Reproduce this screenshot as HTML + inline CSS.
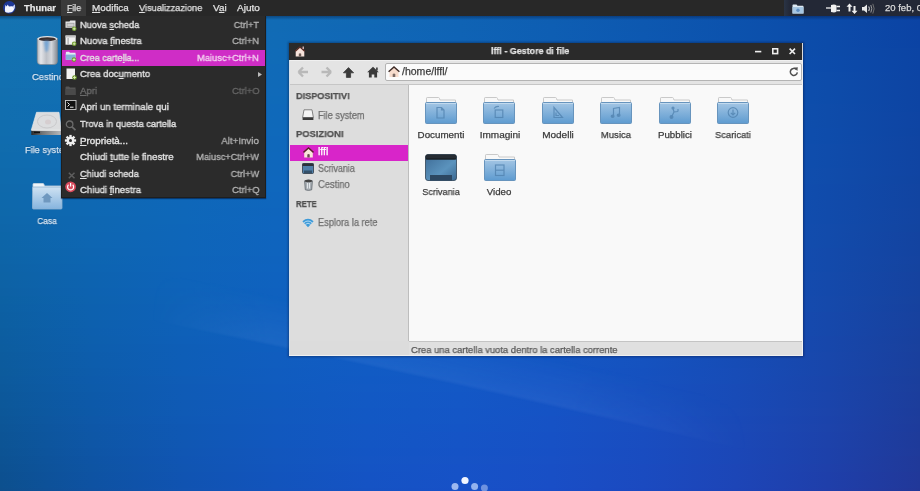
<!DOCTYPE html>
<html><head><meta charset="utf-8"><style>
html,body{margin:0;padding:0;}
body{width:920px;height:491px;overflow:hidden;position:relative;font-family:'Liberation Sans',sans-serif;}
u{text-decoration:underline;text-underline-offset:1px;text-decoration-thickness:1px;}
</style></head><body>

<svg width="0" height="0" style="position:absolute">
<defs>
 <linearGradient id="gFold" x1="0" y1="0" x2="0" y2="1">
  <stop offset="0" stop-color="#a4c6e4"/><stop offset="1" stop-color="#5e9bd0"/>
 </linearGradient>
 <linearGradient id="gFoldD" x1="0" y1="0" x2="0" y2="1">
  <stop offset="0" stop-color="#c6dcef"/><stop offset="1" stop-color="#7aaad6"/>
 </linearGradient>
 <linearGradient id="gDesk" x1="0" y1="0" x2="1" y2="1">
  <stop offset="0" stop-color="#3d6b96"/><stop offset="0.6" stop-color="#5b93bd"/><stop offset="1" stop-color="#3b6890"/>
 </linearGradient>
 <linearGradient id="gTrash" x1="0" y1="0" x2="1" y2="0">
  <stop offset="0" stop-color="#8a8f96"/><stop offset="0.25" stop-color="#e8ecef"/><stop offset="0.5" stop-color="#9aa4ae"/><stop offset="0.75" stop-color="#dfe3e6"/><stop offset="1" stop-color="#7d848c"/>
 </linearGradient>
 <linearGradient id="gDrive" x1="0" y1="0" x2="0" y2="1">
  <stop offset="0" stop-color="#f2f2f2"/><stop offset="1" stop-color="#c9cbcd"/>
 </linearGradient>
 <g id="folder">
  <path d="M1.5 5 V1.2 Q1.5 0.5 2.2 0.5 H13.5 Q14.2 0.5 14.5 1.5 L15 3 H30.5 V8 H1.5Z" fill="#f8f8f8" stroke="#c9c9c9" stroke-width="1"/>
  <rect x="0.5" y="5.5" width="31" height="21" rx="1" fill="url(#gFold)" stroke="#6794bd" stroke-width="1"/>
  <rect x="1" y="6" width="30" height="1" fill="#c2daee"/>
 </g>
</defs></svg>
<div style="position:absolute;left:0;top:0px;width:920px;height:8px;background:linear-gradient(90deg,#1674b1 0.0%,#1472b2 10.0%,#136fb3 20.0%,#116cb3 30.0%,#1068b3 40.0%,#0f63b2 50.0%,#0e5eb1 60.0%,#0d58af 70.0%,#0c51ac 80.0%,#0b4aa9 90.0%,#0a42a5 100.0%)"></div><div style="position:absolute;left:0;top:8px;width:920px;height:8px;background:linear-gradient(90deg,#1574b1 0.0%,#1472b2 10.0%,#126fb4 20.0%,#116cb4 30.0%,#1068b4 40.0%,#0f63b3 50.0%,#0e5eb1 60.0%,#0d58af 70.0%,#0c51ac 80.0%,#0b4aa9 90.0%,#0a43a5 100.0%)"></div><div style="position:absolute;left:0;top:16px;width:920px;height:8px;background:linear-gradient(90deg,#1573b1 0.0%,#1371b3 10.0%,#126fb4 20.0%,#116bb5 30.0%,#1068b4 40.0%,#0f63b4 50.0%,#0e5eb2 60.0%,#0d58b0 70.0%,#0c52ad 80.0%,#0b4ba9 90.0%,#0b43a4 100.0%)"></div><div style="position:absolute;left:0;top:24px;width:920px;height:8px;background:linear-gradient(90deg,#1473b1 0.0%,#1371b3 10.0%,#126eb4 20.0%,#116bb5 30.0%,#1067b5 40.0%,#0f63b4 50.0%,#0e5eb3 60.0%,#0d58b0 70.0%,#0c52ad 80.0%,#0c4ba9 90.0%,#0b43a4 100.0%)"></div><div style="position:absolute;left:0;top:32px;width:920px;height:8px;background:linear-gradient(90deg,#1472b1 0.0%,#1371b3 10.0%,#126eb5 20.0%,#116bb6 30.0%,#1067b6 40.0%,#0f63b5 50.0%,#0e5eb3 60.0%,#0d58b1 70.0%,#0c52ad 80.0%,#0c4ba9 90.0%,#0b43a4 100.0%)"></div><div style="position:absolute;left:0;top:40px;width:920px;height:8px;background:linear-gradient(90deg,#1472b0 0.0%,#1370b3 10.0%,#116eb5 20.0%,#106bb6 30.0%,#1067b6 40.0%,#0f63b5 50.0%,#0e5eb4 60.0%,#0d58b1 70.0%,#0c52ae 80.0%,#0c4ba9 90.0%,#0b43a4 100.0%)"></div><div style="position:absolute;left:0;top:48px;width:920px;height:8px;background:linear-gradient(90deg,#1372b0 0.0%,#1270b3 10.0%,#116eb5 20.0%,#106bb7 30.0%,#0f67b7 40.0%,#0f63b6 50.0%,#0e5eb4 60.0%,#0d58b2 70.0%,#0d52ae 80.0%,#0c4ba9 90.0%,#0c44a4 100.0%)"></div><div style="position:absolute;left:0;top:56px;width:920px;height:8px;background:linear-gradient(90deg,#1371b0 0.0%,#1270b3 10.0%,#116eb6 20.0%,#106bb7 30.0%,#0f67b7 40.0%,#0f63b7 50.0%,#0e5eb5 60.0%,#0d58b2 70.0%,#0d52ae 80.0%,#0c4baa 90.0%,#0c44a4 100.0%)"></div><div style="position:absolute;left:0;top:64px;width:920px;height:8px;background:linear-gradient(90deg,#1371b0 0.0%,#126fb4 10.0%,#116db6 20.0%,#106ab8 30.0%,#0f67b8 40.0%,#0f63b7 50.0%,#0e5eb5 60.0%,#0d58b3 70.0%,#0d52af 80.0%,#0c4baa 90.0%,#0c44a4 100.0%)"></div><div style="position:absolute;left:0;top:72px;width:920px;height:8px;background:linear-gradient(90deg,#1270b0 0.0%,#116fb4 10.0%,#116db6 20.0%,#106ab8 30.0%,#0f67b8 40.0%,#0f63b8 50.0%,#0e5eb6 60.0%,#0d59b3 70.0%,#0d52af 80.0%,#0d4caa 90.0%,#0c44a4 100.0%)"></div><div style="position:absolute;left:0;top:80px;width:920px;height:8px;background:linear-gradient(90deg,#1270b0 0.0%,#116fb4 10.0%,#106db7 20.0%,#106ab8 30.0%,#0f67b9 40.0%,#0f63b8 50.0%,#0e5eb7 60.0%,#0e59b4 70.0%,#0d52af 80.0%,#0d4caa 90.0%,#0d44a3 100.0%)"></div><div style="position:absolute;left:0;top:88px;width:920px;height:8px;background:linear-gradient(90deg,#126faf 0.0%,#116eb4 10.0%,#106cb7 20.0%,#106ab9 30.0%,#0f67ba 40.0%,#0e63b9 50.0%,#0e5eb7 60.0%,#0e59b4 70.0%,#0d52b0 80.0%,#0d4caa 90.0%,#0d44a3 100.0%)"></div><div style="position:absolute;left:0;top:96px;width:920px;height:8px;background:linear-gradient(90deg,#116faf 0.0%,#116eb4 10.0%,#106cb7 20.0%,#0f6ab9 30.0%,#0f66ba 40.0%,#0e63b9 50.0%,#0e5eb8 60.0%,#0e59b4 70.0%,#0d52b0 80.0%,#0d4caa 90.0%,#0d44a3 100.0%)"></div><div style="position:absolute;left:0;top:104px;width:920px;height:8px;background:linear-gradient(90deg,#116eaf 0.0%,#106db4 10.0%,#106cb7 20.0%,#0f69ba 30.0%,#0f66ba 40.0%,#0e62ba 50.0%,#0e5eb8 60.0%,#0e59b5 70.0%,#0e53b0 80.0%,#0e4caa 90.0%,#0d44a3 100.0%)"></div><div style="position:absolute;left:0;top:112px;width:920px;height:8px;background:linear-gradient(90deg,#116eaf 0.0%,#106db4 10.0%,#106bb8 20.0%,#0f69ba 30.0%,#0f66bb 40.0%,#0e62ba 50.0%,#0e5eb9 60.0%,#0e58b5 70.0%,#0e53b1 80.0%,#0e4caa 90.0%,#0e44a3 100.0%)"></div><div style="position:absolute;left:0;top:120px;width:920px;height:8px;background:linear-gradient(90deg,#106dae 0.0%,#106db4 10.0%,#106bb8 20.0%,#0f69ba 30.0%,#0f66bb 40.0%,#0f62bb 50.0%,#0e5eb9 60.0%,#0e58b6 70.0%,#0e53b1 80.0%,#0e4caa 90.0%,#0e44a3 100.0%)"></div><div style="position:absolute;left:0;top:128px;width:920px;height:8px;background:linear-gradient(90deg,#106dae 0.0%,#106cb4 10.0%,#0f6bb8 20.0%,#0f69bb 30.0%,#0f66bc 40.0%,#0f62bb 50.0%,#0e5eba 60.0%,#0e58b6 70.0%,#0e52b1 80.0%,#0e4cab 90.0%,#0e44a2 100.0%)"></div><div style="position:absolute;left:0;top:136px;width:920px;height:8px;background:linear-gradient(90deg,#106cae 0.0%,#106cb4 10.0%,#0f6ab8 20.0%,#0f68bb 30.0%,#0f65bc 40.0%,#0f62bc 50.0%,#0e5dba 60.0%,#0e58b6 70.0%,#0e52b1 80.0%,#0e4cab 90.0%,#0f44a2 100.0%)"></div><div style="position:absolute;left:0;top:144px;width:920px;height:8px;background:linear-gradient(90deg,#106cad 0.0%,#0f6bb4 10.0%,#0f6ab8 20.0%,#0f68bb 30.0%,#0f65bd 40.0%,#0f62bc 50.0%,#0f5dba 60.0%,#0f58b7 70.0%,#0f52b2 80.0%,#0f4cab 90.0%,#0f44a2 100.0%)"></div><div style="position:absolute;left:0;top:152px;width:920px;height:8px;background:linear-gradient(90deg,#0f6bad 0.0%,#0f6bb4 10.0%,#0f6ab9 20.0%,#0f68bc 30.0%,#0f65bd 40.0%,#0f62bd 50.0%,#0f5dbb 60.0%,#0f58b7 70.0%,#0f52b2 80.0%,#0f4cab 90.0%,#0f44a2 100.0%)"></div><div style="position:absolute;left:0;top:160px;width:920px;height:8px;background:linear-gradient(90deg,#0f6bad 0.0%,#0f6bb4 10.0%,#0f69b9 20.0%,#0f67bc 30.0%,#0f65be 40.0%,#0f61bd 50.0%,#0f5dbb 60.0%,#0f58b8 70.0%,#0f52b2 80.0%,#0f4cab 90.0%,#1044a2 100.0%)"></div><div style="position:absolute;left:0;top:168px;width:920px;height:8px;background:linear-gradient(90deg,#0f6aac 0.0%,#0f6ab3 10.0%,#0f69b9 20.0%,#0f67bc 30.0%,#0f65be 40.0%,#0f61be 50.0%,#0f5dbc 60.0%,#0f58b8 70.0%,#0f52b2 80.0%,#104cab 90.0%,#1044a2 100.0%)"></div><div style="position:absolute;left:0;top:176px;width:920px;height:8px;background:linear-gradient(90deg,#0f6aac 0.0%,#0f6ab3 10.0%,#0f69b9 20.0%,#0f67bd 30.0%,#0f64be 40.0%,#0f61be 50.0%,#0f5dbc 60.0%,#0f58b8 70.0%,#0f52b3 80.0%,#104cab 90.0%,#1044a1 100.0%)"></div><div style="position:absolute;left:0;top:184px;width:920px;height:8px;background:linear-gradient(90deg,#0f69ab 0.0%,#0f69b3 10.0%,#0f68b9 20.0%,#0f67bd 30.0%,#0f64bf 40.0%,#0f61bf 50.0%,#0f5dbd 60.0%,#0f58b9 70.0%,#1052b3 80.0%,#104bab 90.0%,#1144a1 100.0%)"></div><div style="position:absolute;left:0;top:192px;width:920px;height:8px;background:linear-gradient(90deg,#0e69ab 0.0%,#0e69b3 10.0%,#0e68b9 20.0%,#0f66bd 30.0%,#0f64bf 40.0%,#0f60bf 50.0%,#0f5cbd 60.0%,#1058b9 70.0%,#1052b3 80.0%,#104bab 90.0%,#1144a1 100.0%)"></div><div style="position:absolute;left:0;top:200px;width:920px;height:8px;background:linear-gradient(90deg,#0e68ab 0.0%,#0e68b3 10.0%,#0e67b9 20.0%,#0f66bd 30.0%,#0f63bf 40.0%,#0f60bf 50.0%,#0f5cbd 60.0%,#1057b9 70.0%,#1052b3 80.0%,#114bab 90.0%,#1144a1 100.0%)"></div><div style="position:absolute;left:0;top:208px;width:920px;height:8px;background:linear-gradient(90deg,#0e68aa 0.0%,#0e68b3 10.0%,#0e67b9 20.0%,#0f65bd 30.0%,#0f63c0 40.0%,#0f60c0 50.0%,#105cbe 60.0%,#1057ba 70.0%,#1052b4 80.0%,#114bab 90.0%,#1244a1 100.0%)"></div><div style="position:absolute;left:0;top:216px;width:920px;height:8px;background:linear-gradient(90deg,#0e67aa 0.0%,#0e67b2 10.0%,#0e67b9 20.0%,#0f65be 30.0%,#0f63c0 40.0%,#0f60c0 50.0%,#105cbe 60.0%,#1057ba 70.0%,#1151b4 80.0%,#114bab 90.0%,#1244a1 100.0%)"></div><div style="position:absolute;left:0;top:224px;width:920px;height:8px;background:linear-gradient(90deg,#0e66a9 0.0%,#0e67b2 10.0%,#0e66b9 20.0%,#0f65be 30.0%,#0f62c0 40.0%,#0f5fc1 50.0%,#105cbf 60.0%,#1057ba 70.0%,#1151b4 80.0%,#124bab 90.0%,#1244a0 100.0%)"></div><div style="position:absolute;left:0;top:232px;width:920px;height:8px;background:linear-gradient(90deg,#0d66a8 0.0%,#0e66b2 10.0%,#0e66b9 20.0%,#0f64be 30.0%,#0f62c1 40.0%,#0f5fc1 50.0%,#105bbf 60.0%,#1157bb 70.0%,#1151b4 80.0%,#124bab 90.0%,#1343a0 100.0%)"></div><div style="position:absolute;left:0;top:240px;width:920px;height:8px;background:linear-gradient(90deg,#0d65a8 0.0%,#0e66b2 10.0%,#0e65b9 20.0%,#0f64be 30.0%,#0f62c1 40.0%,#105fc1 50.0%,#105bbf 60.0%,#1156bb 70.0%,#1251b4 80.0%,#124bab 90.0%,#1343a0 100.0%)"></div><div style="position:absolute;left:0;top:248px;width:920px;height:8px;background:linear-gradient(90deg,#0d65a7 0.0%,#0e65b1 10.0%,#0e65b9 20.0%,#0f64be 30.0%,#0f61c1 40.0%,#105fc2 50.0%,#105bc0 60.0%,#1156bb 70.0%,#1251b5 80.0%,#134aab 90.0%,#1343a0 100.0%)"></div><div style="position:absolute;left:0;top:256px;width:920px;height:8px;background:linear-gradient(90deg,#0d64a7 0.0%,#0d65b1 10.0%,#0e64b9 20.0%,#0f63be 30.0%,#0f61c1 40.0%,#105ec2 50.0%,#115ac0 60.0%,#1156bc 70.0%,#1250b5 80.0%,#134aab 90.0%,#1443a0 100.0%)"></div><div style="position:absolute;left:0;top:264px;width:920px;height:8px;background:linear-gradient(90deg,#0d63a6 0.0%,#0d64b1 10.0%,#0e64b9 20.0%,#0f63bf 30.0%,#0f61c2 40.0%,#105ec2 50.0%,#115ac0 60.0%,#1256bc 70.0%,#1250b5 80.0%,#134aab 90.0%,#14439f 100.0%)"></div><div style="position:absolute;left:0;top:272px;width:920px;height:8px;background:linear-gradient(90deg,#0d63a5 0.0%,#0d63b0 10.0%,#0e63b9 20.0%,#0f62bf 30.0%,#0f60c2 40.0%,#105ec3 50.0%,#115ac1 60.0%,#1255bc 70.0%,#1350b5 80.0%,#144aab 90.0%,#15429f 100.0%)"></div><div style="position:absolute;left:0;top:280px;width:920px;height:8px;background:linear-gradient(90deg,#0d62a5 0.0%,#0d63b0 10.0%,#0e63b9 20.0%,#0f62bf 30.0%,#0f60c2 40.0%,#105dc3 50.0%,#115ac1 60.0%,#1255bc 70.0%,#1350b5 80.0%,#1449ab 90.0%,#15429f 100.0%)"></div><div style="position:absolute;left:0;top:288px;width:920px;height:8px;background:linear-gradient(90deg,#0d61a4 0.0%,#0d62b0 10.0%,#0e62b9 20.0%,#0f61bf 30.0%,#1060c2 40.0%,#105dc3 50.0%,#1159c1 60.0%,#1255bd 70.0%,#134fb5 80.0%,#1449ab 90.0%,#15429f 100.0%)"></div><div style="position:absolute;left:0;top:296px;width:920px;height:8px;background:linear-gradient(90deg,#0c61a3 0.0%,#0d62af 10.0%,#0e62b8 20.0%,#0f61bf 30.0%,#105fc2 40.0%,#115cc3 50.0%,#1259c1 60.0%,#1354bd 70.0%,#144fb5 80.0%,#1549ab 90.0%,#16429e 100.0%)"></div><div style="position:absolute;left:0;top:304px;width:920px;height:8px;background:linear-gradient(90deg,#0c60a3 0.0%,#0d61af 10.0%,#0e61b8 20.0%,#0f60bf 30.0%,#105fc3 40.0%,#115cc4 50.0%,#1259c2 60.0%,#1354bd 70.0%,#144fb6 80.0%,#1549ab 90.0%,#16419e 100.0%)"></div><div style="position:absolute;left:0;top:312px;width:920px;height:8px;background:linear-gradient(90deg,#0c5fa2 0.0%,#0d61af 10.0%,#0e61b8 20.0%,#0f60bf 30.0%,#105ec3 40.0%,#115cc4 50.0%,#1258c2 60.0%,#1354bd 70.0%,#144eb6 80.0%,#1648ab 90.0%,#17419e 100.0%)"></div><div style="position:absolute;left:0;top:320px;width:920px;height:8px;background:linear-gradient(90deg,#0c5fa1 0.0%,#0d60ae 10.0%,#0e60b8 20.0%,#0f5fbf 30.0%,#105ec3 40.0%,#115bc4 50.0%,#1258c2 60.0%,#1353be 70.0%,#154eb6 80.0%,#1648ab 90.0%,#17419e 100.0%)"></div><div style="position:absolute;left:0;top:328px;width:920px;height:8px;background:linear-gradient(90deg,#0c5ea0 0.0%,#0d5fae 10.0%,#0e60b8 20.0%,#0f5fbf 30.0%,#105dc3 40.0%,#115bc4 50.0%,#1357c3 60.0%,#1453be 70.0%,#154eb6 80.0%,#1648ab 90.0%,#18409e 100.0%)"></div><div style="position:absolute;left:0;top:336px;width:920px;height:8px;background:linear-gradient(90deg,#0c5da0 0.0%,#0d5fad 10.0%,#0e5fb8 20.0%,#0f5ebf 30.0%,#105dc3 40.0%,#125ac5 50.0%,#1357c3 60.0%,#1453be 70.0%,#154db6 80.0%,#1747ab 90.0%,#18409d 100.0%)"></div><div style="position:absolute;left:0;top:344px;width:920px;height:8px;background:linear-gradient(90deg,#0c5d9f 0.0%,#0d5ead 10.0%,#0e5eb7 20.0%,#0f5ebf 30.0%,#115cc3 40.0%,#125ac5 50.0%,#1357c3 60.0%,#1452be 70.0%,#164db6 80.0%,#1747ab 90.0%,#19409d 100.0%)"></div><div style="position:absolute;left:0;top:352px;width:920px;height:8px;background:linear-gradient(90deg,#0c5c9e 0.0%,#0d5dac 10.0%,#0e5eb7 20.0%,#105dbf 30.0%,#115cc3 40.0%,#125ac5 50.0%,#1356c3 60.0%,#1552be 70.0%,#164db6 80.0%,#1847ab 90.0%,#193f9d 100.0%)"></div><div style="position:absolute;left:0;top:360px;width:920px;height:8px;background:linear-gradient(90deg,#0c5b9d 0.0%,#0d5dac 10.0%,#0e5db7 20.0%,#105dbf 30.0%,#115bc4 40.0%,#1259c5 50.0%,#1456c3 60.0%,#1552bf 70.0%,#164cb6 80.0%,#1846ab 90.0%,#193f9d 100.0%)"></div><div style="position:absolute;left:0;top:368px;width:920px;height:8px;background:linear-gradient(90deg,#0c5b9c 0.0%,#0d5cab 10.0%,#0e5db7 20.0%,#105cbf 30.0%,#115bc4 40.0%,#1359c5 50.0%,#1455c4 60.0%,#1551bf 70.0%,#174cb7 80.0%,#1846ab 90.0%,#1a3f9c 100.0%)"></div><div style="position:absolute;left:0;top:376px;width:920px;height:8px;background:linear-gradient(90deg,#0c5a9c 0.0%,#0d5bab 10.0%,#0f5cb6 20.0%,#105cbf 30.0%,#115ac4 40.0%,#1358c5 50.0%,#1455c4 60.0%,#1651bf 70.0%,#174cb7 80.0%,#1945ab 90.0%,#1a3e9c 100.0%)"></div><div style="position:absolute;left:0;top:384px;width:920px;height:8px;background:linear-gradient(90deg,#0c599b 0.0%,#0d5baa 10.0%,#0f5bb6 20.0%,#105bbf 30.0%,#125ac4 40.0%,#1358c6 50.0%,#1554c4 60.0%,#1650bf 70.0%,#184bb7 80.0%,#1945ab 90.0%,#1b3e9c 100.0%)"></div><div style="position:absolute;left:0;top:392px;width:920px;height:8px;background:linear-gradient(90deg,#0c589a 0.0%,#0d5aa9 10.0%,#0f5bb6 20.0%,#105bbe 30.0%,#1259c4 40.0%,#1357c6 50.0%,#1554c4 60.0%,#1650bf 70.0%,#184bb7 80.0%,#1a45ab 90.0%,#1b3d9c 100.0%)"></div><div style="position:absolute;left:0;top:400px;width:920px;height:8px;background:linear-gradient(90deg,#0c5899 0.0%,#0d59a9 10.0%,#0f5ab5 20.0%,#105abe 30.0%,#1259c4 40.0%,#1457c6 50.0%,#1553c4 60.0%,#174fbf 70.0%,#184ab7 80.0%,#1a44ab 90.0%,#1c3d9b 100.0%)"></div><div style="position:absolute;left:0;top:408px;width:920px;height:8px;background:linear-gradient(90deg,#0c5798 0.0%,#0d59a8 10.0%,#0f5ab5 20.0%,#1159be 30.0%,#1258c4 40.0%,#1456c6 50.0%,#1553c5 60.0%,#174fc0 70.0%,#194ab7 80.0%,#1b44ab 90.0%,#1c3c9b 100.0%)"></div><div style="position:absolute;left:0;top:416px;width:920px;height:8px;background:linear-gradient(90deg,#0c5697 0.0%,#0e58a8 10.0%,#0f59b5 20.0%,#1159be 30.0%,#1258c4 40.0%,#1456c6 50.0%,#1652c5 60.0%,#184ec0 70.0%,#1949b7 80.0%,#1b43ab 90.0%,#1d3c9b 100.0%)"></div><div style="position:absolute;left:0;top:424px;width:920px;height:8px;background:linear-gradient(90deg,#0c5596 0.0%,#0e57a7 10.0%,#0f58b4 20.0%,#1158be 30.0%,#1357c4 40.0%,#1455c6 50.0%,#1652c5 60.0%,#184ec0 70.0%,#1a49b7 80.0%,#1c43ab 90.0%,#1d3b9b 100.0%)"></div><div style="position:absolute;left:0;top:432px;width:920px;height:8px;background:linear-gradient(90deg,#0c5495 0.0%,#0e57a6 10.0%,#0f58b4 20.0%,#1158be 30.0%,#1357c4 40.0%,#1554c6 50.0%,#1651c5 60.0%,#184dc0 70.0%,#1a48b7 80.0%,#1c42ab 90.0%,#1e3b9a 100.0%)"></div><div style="position:absolute;left:0;top:440px;width:920px;height:8px;background:linear-gradient(90deg,#0c5494 0.0%,#0e56a6 10.0%,#1057b3 20.0%,#1157be 30.0%,#1356c4 40.0%,#1554c6 50.0%,#1751c5 60.0%,#194dc0 70.0%,#1b48b7 80.0%,#1d42aa 90.0%,#1e3a9a 100.0%)"></div><div style="position:absolute;left:0;top:448px;width:920px;height:8px;background:linear-gradient(90deg,#0c5393 0.0%,#0e55a5 10.0%,#1056b3 20.0%,#1256bd 30.0%,#1355c4 40.0%,#1553c6 50.0%,#1750c5 60.0%,#194cc0 70.0%,#1b47b7 80.0%,#1d41aa 90.0%,#1f3a9a 100.0%)"></div><div style="position:absolute;left:0;top:456px;width:920px;height:8px;background:linear-gradient(90deg,#0c5292 0.0%,#0e54a4 10.0%,#1055b3 20.0%,#1256bd 30.0%,#1455c4 40.0%,#1653c6 50.0%,#1850c5 60.0%,#194cc0 70.0%,#1b47b7 80.0%,#1d41aa 90.0%,#203999 100.0%)"></div><div style="position:absolute;left:0;top:464px;width:920px;height:8px;background:linear-gradient(90deg,#0c5191 0.0%,#0e54a3 10.0%,#1055b2 20.0%,#1255bd 30.0%,#1454c4 40.0%,#1652c7 50.0%,#184fc5 60.0%,#1a4bc0 70.0%,#1c46b7 80.0%,#1e40aa 90.0%,#203999 100.0%)"></div><div style="position:absolute;left:0;top:472px;width:920px;height:8px;background:linear-gradient(90deg,#0c5090 0.0%,#0e53a3 10.0%,#1054b2 20.0%,#1254bd 30.0%,#1453c4 40.0%,#1652c7 50.0%,#184fc5 60.0%,#1a4bc0 70.0%,#1c46b7 80.0%,#1e3faa 90.0%,#213899 100.0%)"></div><div style="position:absolute;left:0;top:480px;width:920px;height:8px;background:linear-gradient(90deg,#0c508e 0.0%,#0e52a2 10.0%,#1053b1 20.0%,#1254bc 30.0%,#1553c4 40.0%,#1751c7 50.0%,#194ec6 60.0%,#1b4ac0 70.0%,#1d45b7 80.0%,#1f3faa 90.0%,#213899 100.0%)"></div><div style="position:absolute;left:0;top:488px;width:920px;height:8px;background:linear-gradient(90deg,#0d4f8d 0.0%,#0f51a1 10.0%,#1153b1 20.0%,#1353bc 30.0%,#1552c3 40.0%,#1750c7 50.0%,#194dc6 60.0%,#1b49c0 70.0%,#1d44b7 80.0%,#203eaa 90.0%,#223798 100.0%)"></div>
<svg style="position:absolute;left:0;top:0" width="920" height="491"><defs>
<filter id="fb2" x="-20%" y="-50%" width="140%" height="200%"><feGaussianBlur stdDeviation="1.2"/></filter>
<linearGradient id="gHz" x1="0" y1="0" x2="1" y2="0"><stop offset="0" stop-color="#fff" stop-opacity="0"/><stop offset="0.2" stop-color="#fff" stop-opacity="1"/><stop offset="0.7" stop-color="#fff" stop-opacity="1"/><stop offset="1" stop-color="#fff" stop-opacity="0"/></linearGradient>
<mask id="mHz" maskUnits="userSpaceOnUse" x="0" y="0" width="920" height="491"><rect x="150" y="0" width="600" height="491" fill="url(#gHz)"/></mask>
<linearGradient id="gPerp" gradientUnits="userSpaceOnUse" x1="445" y1="384" x2="456" y2="335"><stop offset="0" stop-color="#9ccaff" stop-opacity="0.09"/><stop offset="0.35" stop-color="#9ccaff" stop-opacity="0.055"/><stop offset="1" stop-color="#9ccaff" stop-opacity="0"/></linearGradient>
</defs>
<g mask="url(#mHz)"><path d="M150 320 Q445 378 750 451 L750 396 Q445 330 150 270 Z" fill="url(#gPerp)" filter="url(#fb2)"/></g>
</svg>
<svg style="position:absolute;left:36px;top:35px;overflow:visible" width="23" height="31" viewBox="0 0 23 31">
 <defs><linearGradient id="gTr2" x1="0" y1="0" x2="1" y2="0">
  <stop offset="0" stop-color="#aeb3bb"/><stop offset="0.18" stop-color="#e4e6ea"/><stop offset="0.45" stop-color="#bcc0c7"/><stop offset="0.7" stop-color="#d4d7dc"/><stop offset="1" stop-color="#838991"/>
 </linearGradient>
 <filter id="fbt"><feGaussianBlur stdDeviation="0.8"/></filter></defs>
 <path d="M1.2 3.5 H21.5 V26 Q21.5 29.5 18 29.5 H4.7 Q1.2 29.5 1.2 26 Z" fill="url(#gTr2)" stroke="#7d838a" stroke-width="0.6"/>
 <ellipse cx="11.35" cy="3.8" rx="10" ry="2.8" fill="#dfe2e6"/>
 <ellipse cx="11.35" cy="4.2" rx="8.6" ry="2" fill="#3a2e2e"/>
 <path d="M7.5 5.5 L13.5 5.5 L12 16 L9.5 17 Z" fill="#5a9ad8" opacity="0.7" filter="url(#fbt)"/>
</svg>
<div style="position:absolute;top:71.70px;line-height:9.8px;font-size:9.8px;color:#d6e8f6;white-space:nowrap;will-change:transform;-webkit-text-stroke:0.25px #d6e8f6;transform:scaleX(0.9573);transform-origin:0 0;left:32.1px;text-shadow:0 0 1.5px rgba(0,20,60,0.6);">Cestino</div>
<svg style="position:absolute;left:31px;top:112px;overflow:visible" width="31" height="24" viewBox="0 0 31 24">
 <defs><linearGradient id="gDr2" x1="0" y1="0" x2="1" y2="0">
  <stop offset="0" stop-color="#2a2a2a"/><stop offset="0.35" stop-color="#707274"/><stop offset="1" stop-color="#b8babc"/></linearGradient></defs>
 <path d="M5.5 0.3 H28 L30.5 18 H0.3 Z" fill="#dcdddf" stroke="#eceeef" stroke-width="0.6"/>
 <ellipse cx="16" cy="9.5" rx="9.5" ry="6.5" fill="none" stroke="#c6c6c8" stroke-width="0.9"/>
 <ellipse cx="17" cy="10" rx="3" ry="2.5" fill="#d6ced0"/>
 <rect x="0.3" y="18" width="30.2" height="5" fill="url(#gDr2)"/>
 <rect x="0.3" y="18" width="30.2" height="0.8" fill="#f0f0f0"/>
 <rect x="3" y="19.6" width="6" height="1.6" fill="#111"/>
</svg>
<div style="position:absolute;top:144.50px;line-height:9.8px;font-size:9.8px;color:#d6e8f6;white-space:nowrap;will-change:transform;-webkit-text-stroke:0.25px #d6e8f6;transform:scaleX(0.9385);transform-origin:0 0;left:24.7px;text-shadow:0 0 1.5px rgba(0,20,60,0.6);">File system</div>
<svg style="position:absolute;left:32px;top:183px;overflow:visible" width="31" height="27" viewBox="0 0 31 27">
 <path d="M1 5 V1.2 Q1 0.5 1.7 0.5 H11 Q11.7 0.5 12 1.5 L12.5 3 H29.5 V8 H1Z" fill="#eef4f9" stroke="#c6d4e0" stroke-width="0.8"/>
 <defs><linearGradient id="gCasa" x1="0" y1="0" x2="0" y2="1"><stop offset="0" stop-color="#cfe2f2"/><stop offset="1" stop-color="#86b4de"/></linearGradient></defs>
 <rect x="0.5" y="4" width="29.5" height="22" rx="1" fill="url(#gCasa)" stroke="#8fb2d0" stroke-width="0.8"/>
 <path d="M15 10 L20.5 15 H18.5 V19.5 H11.5 V15 H9.5 Z" fill="#6f98bf"/>
</svg>
<div style="position:absolute;top:217.28px;line-height:9.0px;font-size:9.0px;color:#d6e8f6;white-space:nowrap;will-change:transform;-webkit-text-stroke:0.25px #d6e8f6;transform:scaleX(0.9326);transform-origin:50% 0;left:-103.10px;width:300px;text-align:center;text-shadow:0 0 1.5px rgba(0,20,60,0.6);">Casa</div>
<div style="position:absolute;left:289px;top:43px;width:514px;height:313px;background:transparent;box-shadow:0 0 2px 1px rgba(0,10,40,0.35);"></div>
<div style="position:absolute;left:289px;top:43px;width:514px;height:313px;background:#dcdcdc;"></div>
<div style="position:absolute;left:289px;top:43px;width:513px;height:17px;background:#2a2a2a;"></div>
<svg style="position:absolute;left:295px;top:46px;overflow:visible" width="10" height="11" viewBox="0 0 10 11">
 <path d="M5 0.8 L9.3 4.6 V10.5 H0.7 V4.6 Z" fill="#f6e2da"/>
 <path d="M0.3 5.2 L5 1 L9.7 5.2" fill="none" stroke="#5a2a22" stroke-width="1.3"/>
 <rect x="7.5" y="0.5" width="1.5" height="2.5" fill="#c9a9a9"/>
 <path d="M3.8 10.5 V7.8 Q5 6.6 6.2 7.8 V10.5Z" fill="#6b5a55"/>
</svg>
<div style="position:absolute;top:46.47px;line-height:9.6px;font-size:9.6px;color:#e4e4e4;white-space:nowrap;will-change:transform;-webkit-text-stroke:0.25px #e4e4e4;font-weight:bold;transform:scaleX(0.9284);transform-origin:0 0;left:490.6px;">lffl - Gestore di file</div>
<svg style="position:absolute;left:754px;top:48px;overflow:visible" width="42" height="7" viewBox="0 0 42 7">
 <rect x="1" y="2.8" width="6.3" height="1.6" fill="#eeeeee"/>
 <rect x="18.8" y="0.8" width="4.8" height="4.8" fill="none" stroke="#eeeeee" stroke-width="1.6"/>
 <path d="M35.6 0.6 L41 6 M41 0.6 L35.6 6" stroke="#eeeeee" stroke-width="1.6"/>
</svg>
<div style="position:absolute;left:289px;top:60px;width:514px;height:25px;background:#e4e4e4;"></div>
<div style="position:absolute;left:289px;top:60px;width:514px;height:1px;background:#f0f0f0;"></div>
<div style="position:absolute;left:289px;top:84px;width:514px;height:1px;background:#c6c6c6;"></div>
<svg style="position:absolute;left:296.5px;top:66px;overflow:visible" width="90" height="13" viewBox="0 0 90 13">
 <path d="M1.5 6 L6 1.5 M1.5 6 L6 10.5 M1.5 6 H11" stroke="#b9b9b9" stroke-width="2.4" fill="none" stroke-linejoin="round"/>
 <path d="M34 6 L29.5 1.5 M34 6 L29.5 10.5 M34 6 H24.5" stroke="#b9b9b9" stroke-width="2.4" fill="none" stroke-linejoin="round"/>
 <path d="M51.5 1.6 L56.6 6.8 H53.6 V11.4 H49.4 V6.8 H46.4 Z" fill="#3a3a3a" stroke="#3a3a3a" stroke-width="0.8" stroke-linejoin="round"/>
 <path d="M76 0.8 L81.8 6.3 H80.1 V11.6 H77.3 V8.4 H74.7 V11.6 H71.9 V6.3 H70.2 Z" fill="#3a3a3a"/>
 <rect x="79.1" y="1.5" width="1.6" height="3" fill="#3a3a3a"/>
</svg>
<div style="position:absolute;left:385px;top:63px;width:416.5px;height:17.5px;background:#fbfbfb;box-sizing:border-box;border:1px solid #b4b4b4;border-radius:2px;"></div>
<svg style="position:absolute;left:388px;top:65.5px;overflow:visible" width="12" height="12" viewBox="0 0 12 12">
 <path d="M6 1.2 L10.5 5 V11 H1.5 V5 Z" fill="#f7dccd"/>
 <path d="M0.6 5.8 L6 1 L11.4 5.8" fill="none" stroke="#3c2a26" stroke-width="1.4"/>
 <path d="M4.7 11 V8 Q6 7 7.3 8 V11Z" fill="#7a6a64"/>
</svg>
<div style="position:absolute;top:66.58px;line-height:10.3px;font-size:10.3px;color:#3c3c3c;white-space:nowrap;will-change:transform;-webkit-text-stroke:0.25px #3c3c3c;transform:scaleX(1.0213);transform-origin:0 0;left:402.4px;">/home/lffl/</div>
<svg style="position:absolute;left:789px;top:67px;overflow:visible" width="10" height="10" viewBox="0 0 10 10">
 <path d="M7.3 2.4 A3.5 3.5 0 1 0 8.3 5.3" fill="none" stroke="#505050" stroke-width="1.5"/>
 <path d="M5.2 0.8 L8.8 0.3 L8.4 4 Z" fill="#505050"/>
</svg>
<div style="position:absolute;left:289px;top:85px;width:120px;height:256px;background:#dddddd;"></div>
<div style="position:absolute;left:289px;top:60px;width:1px;height:296px;background:#d6e0ea;"></div>
<div style="position:absolute;top:90.92px;line-height:9.9px;font-size:9.9px;color:#505050;white-space:nowrap;will-change:transform;-webkit-text-stroke:0.25px #505050;font-weight:bold;transform:scaleX(0.9231);transform-origin:0 0;left:296px;">DISPOSITIVI</div>
<svg style="position:absolute;left:302px;top:109px;overflow:visible" width="12" height="12" viewBox="0 0 12 12">
 <path d="M2 0.8 H10 L11.4 8.5 H0.6 Z" fill="#f4f4f4" stroke="#777" stroke-width="0.9"/>
 <rect x="0.6" y="8.5" width="10.8" height="2.5" fill="#3a3a3a"/>
</svg>
<div style="position:absolute;top:110.53px;line-height:10px;font-size:10px;color:#6e6e6e;white-space:nowrap;will-change:transform;-webkit-text-stroke:0.25px #6e6e6e;transform:scaleX(0.9197);transform-origin:0 0;left:318.3px;">File system</div>
<div style="position:absolute;top:128.72px;line-height:9.9px;font-size:9.9px;color:#505050;white-space:nowrap;will-change:transform;-webkit-text-stroke:0.25px #505050;font-weight:bold;transform:scaleX(0.9512);transform-origin:0 0;left:296px;">POSIZIONI</div>
<div style="position:absolute;left:290px;top:145px;width:118px;height:16px;background:#d825c9;"></div>
<svg style="position:absolute;left:303px;top:147px;overflow:visible" width="11" height="11" viewBox="0 0 11 11">
 <path d="M5.5 1.2 L9.8 4.8 V10.6 H1.2 V4.8 Z" fill="#f9e4da"/>
 <path d="M0.5 5.4 L5.5 1 L10.5 5.4" fill="none" stroke="#5a1f2a" stroke-width="1.4"/>
 <path d="M4.3 10.6 V7.6 Q5.5 6.6 6.7 7.6 V10.6Z" fill="#6b4a50"/>
</svg>
<div style="position:absolute;top:147.34px;line-height:10px;font-size:10px;color:#ffffff;white-space:nowrap;will-change:transform;-webkit-text-stroke:0.25px #ffffff;transform:scaleX(1.0582);transform-origin:0 0;left:318.4px;">lffl</div>
<svg style="position:absolute;left:302px;top:163px;overflow:visible" width="12" height="11" viewBox="0 0 12 11">
 <rect x="0.5" y="0.5" width="11" height="10" rx="1" fill="#4f7fa8" stroke="#2e3944" stroke-width="0.8"/>
 <rect x="0.5" y="0.5" width="11" height="2.5" fill="#2b3138"/>
 <rect x="2" y="7.5" width="8" height="2.5" fill="#33506a"/>
</svg>
<div style="position:absolute;top:163.73px;line-height:10px;font-size:10px;color:#6e6e6e;white-space:nowrap;will-change:transform;-webkit-text-stroke:0.25px #6e6e6e;transform:scaleX(0.8945);transform-origin:0 0;left:318px;">Scrivania</div>
<svg style="position:absolute;left:304px;top:179px;overflow:visible" width="9" height="12" viewBox="0 0 9 12">
 <path d="M0.6 1.8 Q4.5 0 8.4 1.8 L7.7 10.8 Q4.5 12 1.3 10.8Z" fill="#aab0b6" stroke="#5d646b" stroke-width="0.8"/>
 <ellipse cx="4.5" cy="2" rx="3.6" ry="1.2" fill="#444"/>
 <path d="M3.5 4 V9.5 M5.5 4 V9.5" stroke="#e8ecef" stroke-width="0.9"/>
</svg>
<div style="position:absolute;top:179.94px;line-height:10px;font-size:10px;color:#6e6e6e;white-space:nowrap;will-change:transform;-webkit-text-stroke:0.25px #6e6e6e;transform:scaleX(0.9379);transform-origin:0 0;left:318px;">Cestino</div>
<div style="position:absolute;top:199.42px;line-height:9.9px;font-size:9.9px;color:#505050;white-space:nowrap;will-change:transform;-webkit-text-stroke:0.25px #505050;font-weight:bold;transform:scaleX(0.7858);transform-origin:0 0;left:296px;">RETE</div>
<svg style="position:absolute;left:302px;top:218px;overflow:visible" width="12" height="10" viewBox="0 0 12 10">
 <path d="M6 9.2 L0.4 3.2 Q6 -1.6 11.6 3.2 Z" fill="#3d9ad8"/>
 <path d="M1.8 4.8 Q6 1.2 10.2 4.8" fill="none" stroke="#bfe0f6" stroke-width="0.9"/>
 <path d="M3.3 6.4 Q6 4 8.7 6.4" fill="none" stroke="#bfe0f6" stroke-width="0.9"/>
</svg>
<div style="position:absolute;top:217.94px;line-height:10px;font-size:10px;color:#6e6e6e;white-space:nowrap;will-change:transform;-webkit-text-stroke:0.25px #6e6e6e;transform:scaleX(0.9212);transform-origin:0 0;left:318px;">Esplora la rete</div>
<div style="position:absolute;left:408px;top:85px;width:394px;height:256px;background:#f9f9f9;box-sizing:border-box;border-left:1px solid #bdbdbd;"></div>
<svg style="position:absolute;left:425px;top:97px;overflow:visible" width="32" height="27" viewBox="0 0 32 27"><use href="#folder"/><g fill="none" stroke="#4f80ad" stroke-width="1.2" opacity="0.75"><path d="M12 10.5 H16.5 L19 13 V21 H12 Z M16.5 10.5 V13 H19"/></g></svg>
<div style="position:absolute;top:129.77px;line-height:9.6px;font-size:9.6px;color:#3a3a3a;white-space:nowrap;will-change:transform;-webkit-text-stroke:0.25px #3a3a3a;transform:scaleX(1.0205);transform-origin:50% 0;left:291.00px;width:300px;text-align:center;">Documenti</div>
<svg style="position:absolute;left:483px;top:97px;overflow:visible" width="32" height="27" viewBox="0 0 32 27"><use href="#folder"/><g fill="none" stroke="#4f80ad" stroke-width="1.2" opacity="0.75"><rect x="12.2" y="13" width="7.6" height="7.5"/><path d="M11 11.5 Q13 9 16 9.5"/></g></svg>
<div style="position:absolute;top:129.77px;line-height:9.6px;font-size:9.6px;color:#3a3a3a;white-space:nowrap;will-change:transform;-webkit-text-stroke:0.25px #3a3a3a;transform:scaleX(1.0431);transform-origin:50% 0;left:350.30px;width:300px;text-align:center;">Immagini</div>
<svg style="position:absolute;left:542px;top:97px;overflow:visible" width="32" height="27" viewBox="0 0 32 27"><use href="#folder"/><g fill="none" stroke="#4f80ad" stroke-width="1.2" opacity="0.75"><path d="M12 10.5 V20.5 H20.5 Z M14 15.5 V18.5 H17"/></g></svg>
<div style="position:absolute;top:129.77px;line-height:9.6px;font-size:9.6px;color:#3a3a3a;white-space:nowrap;will-change:transform;-webkit-text-stroke:0.25px #3a3a3a;transform:scaleX(1.0425);transform-origin:50% 0;left:408.15px;width:300px;text-align:center;">Modelli</div>
<svg style="position:absolute;left:600px;top:97px;overflow:visible" width="32" height="27" viewBox="0 0 32 27"><use href="#folder"/><g fill="none" stroke="#4f80ad" stroke-width="1.2" opacity="0.75"><path d="M13.5 19 V11.5 L19.5 10.5 V18" /><ellipse cx="12.6" cy="19.2" rx="1.4" ry="1.1" fill="#4f80ad"/><ellipse cx="18.6" cy="18.2" rx="1.4" ry="1.1" fill="#4f80ad"/></g></svg>
<div style="position:absolute;top:129.77px;line-height:9.6px;font-size:9.6px;color:#3a3a3a;white-space:nowrap;will-change:transform;-webkit-text-stroke:0.25px #3a3a3a;transform:scaleX(0.9904);transform-origin:50% 0;left:466.15px;width:300px;text-align:center;">Musica</div>
<svg style="position:absolute;left:659px;top:97px;overflow:visible" width="32" height="27" viewBox="0 0 32 27"><use href="#folder"/><g fill="none" stroke="#4f80ad" stroke-width="1.2" opacity="0.75"><circle cx="12.5" cy="20" r="1.4" fill="#4f80ad"/><path d="M12.5 20 L15 15 L14 11.5 M15 15 L19 14.5 M19 12 V14.5"/><circle cx="14" cy="11" r="1" fill="#4f80ad"/></g></svg>
<div style="position:absolute;top:129.77px;line-height:9.6px;font-size:9.6px;color:#3a3a3a;white-space:nowrap;will-change:transform;-webkit-text-stroke:0.25px #3a3a3a;transform:scaleX(1.0116);transform-origin:50% 0;left:525.00px;width:300px;text-align:center;">Pubblici</div>
<svg style="position:absolute;left:717px;top:97px;overflow:visible" width="32" height="27" viewBox="0 0 32 27"><use href="#folder"/><g fill="none" stroke="#4f80ad" stroke-width="1.2" opacity="0.75"><circle cx="16" cy="15.5" r="4.8"/><path d="M16 12.5 V18 M13.8 15.8 L16 18 L18.2 15.8"/></g></svg>
<div style="position:absolute;top:129.77px;line-height:9.6px;font-size:9.6px;color:#3a3a3a;white-space:nowrap;will-change:transform;-webkit-text-stroke:0.25px #3a3a3a;transform:scaleX(0.9702);transform-origin:50% 0;left:583.35px;width:300px;text-align:center;">Scaricati</div>
<svg style="position:absolute;left:425px;top:154px;overflow:visible" width="32" height="27" viewBox="0 0 32 27">
 <rect x="0.5" y="0.5" width="31" height="26" rx="2.5" fill="url(#gDesk)" stroke="#2f4256" stroke-width="0.8"/>
 <rect x="0.5" y="0.5" width="31" height="5" rx="2" fill="#262c33"/>
 <rect x="0.8" y="4.5" width="30.4" height="1" fill="#151a1f"/>
 <rect x="5" y="21" width="22" height="5.6" fill="#2c4761"/>
</svg>
<div style="position:absolute;top:186.87px;line-height:9.6px;font-size:9.6px;color:#3a3a3a;white-space:nowrap;will-change:transform;-webkit-text-stroke:0.25px #3a3a3a;transform:scaleX(0.9501);transform-origin:50% 0;left:290.85px;width:300px;text-align:center;">Scrivania</div>
<svg style="position:absolute;left:484px;top:154px;overflow:visible" width="32" height="27" viewBox="0 0 32 27"><use href="#folder"/><g fill="none" stroke="#4f80ad" stroke-width="1.2" opacity="0.75"><rect x="11.5" y="11" width="8.5" height="10.5"/><path d="M11.5 16.2 H20"/></g></svg>
<div style="position:absolute;top:186.87px;line-height:9.6px;font-size:9.6px;color:#3a3a3a;white-space:nowrap;will-change:transform;-webkit-text-stroke:0.25px #3a3a3a;transform:scaleX(1.0092);transform-origin:50% 0;left:349.30px;width:300px;text-align:center;">Video</div>
<div style="position:absolute;left:409px;top:341px;width:393px;height:15px;background:#e0e0e0;box-sizing:border-box;border-top:1px solid #c4c4c4;"></div>
<div style="position:absolute;left:802px;top:60px;width:1px;height:296px;background:#f2f2f2;"></div>
<div style="position:absolute;left:289px;top:355px;width:514px;height:1px;background:#f0f0f0;"></div>
<div style="position:absolute;top:344.87px;line-height:9.6px;font-size:9.6px;color:#585858;white-space:nowrap;will-change:transform;-webkit-text-stroke:0.25px #585858;transform:scaleX(0.9803);transform-origin:0 0;left:411px;">Crea una cartella vuota dentro la cartella corrente</div>
<div style="position:absolute;left:0px;top:16px;width:920px;height:4px;background:linear-gradient(180deg, rgba(0,10,40,0.35), rgba(0,10,40,0));"></div>
<div style="position:absolute;left:0px;top:0px;width:920px;height:16px;background:#282828;"></div>
<div style="position:absolute;left:784px;top:0px;width:136px;height:16px;background:#232836;"></div>
<div style="position:absolute;left:784px;top:0px;width:6px;height:16px;background:linear-gradient(90deg,#2a3445,#232836);"></div>
<div style="position:absolute;left:61px;top:0px;width:25px;height:16px;background:#3a3a3a;"></div>
<svg style="position:absolute;left:3px;top:1px;overflow:visible" width="13" height="13" viewBox="0 0 13 13">
 <circle cx="6.3" cy="6.4" r="6.3" fill="#1d3796"/>
 <path d="M2.2 11 Q1.6 7.5 2.4 4 L3.8 5.5 L4.6 3.5 L6 5.6 Q8.5 5 10 5.4 L12 3.4 Q12 6 11.2 8 Q10.5 11 6.5 11.6 Q3.8 11.8 2.2 11Z" fill="#f4f6ff"/>
 <path d="M9.6 5.4 L12 3.4 Q12 6 11.2 8 Z" fill="#b8c4f0"/>
</svg>
<div style="position:absolute;top:3.44px;line-height:9.4px;font-size:9.4px;color:#e6e6e6;white-space:nowrap;will-change:transform;-webkit-text-stroke:0.25px #e6e6e6;font-weight:bold;transform:scaleX(1.0006);transform-origin:0 0;left:24px;">Thunar</div>
<div style="position:absolute;top:3.19px;line-height:9.7px;font-size:9.7px;color:#e0e0e0;white-space:nowrap;will-change:transform;-webkit-text-stroke:0.25px #e0e0e0;transform:scaleX(0.9024);transform-origin:0 0;left:67px;"><u>F</u>ile</div>
<div style="position:absolute;top:3.19px;line-height:9.7px;font-size:9.7px;color:#e0e0e0;white-space:nowrap;will-change:transform;-webkit-text-stroke:0.25px #e0e0e0;transform:scaleX(1.0196);transform-origin:0 0;left:92px;"><u>M</u>odifica</div>
<div style="position:absolute;top:3.19px;line-height:9.7px;font-size:9.7px;color:#e0e0e0;white-space:nowrap;will-change:transform;-webkit-text-stroke:0.25px #e0e0e0;transform:scaleX(0.9503);transform-origin:0 0;left:139px;"><u>V</u>isualizzazione</div>
<div style="position:absolute;top:3.19px;line-height:9.7px;font-size:9.7px;color:#e0e0e0;white-space:nowrap;will-change:transform;-webkit-text-stroke:0.25px #e0e0e0;transform:scaleX(1.0228);transform-origin:0 0;left:213.4px;">V<u>a</u>i</div>
<div style="position:absolute;top:3.19px;line-height:9.7px;font-size:9.7px;color:#e0e0e0;white-space:nowrap;will-change:transform;-webkit-text-stroke:0.25px #e0e0e0;transform:scaleX(1.0365);transform-origin:0 0;left:237.3px;">A<u>j</u>uto</div>
<svg style="position:absolute;left:792px;top:4px;overflow:visible" width="12" height="10" viewBox="0 0 12 10">
 <path d="M0.5 1.2 Q0.5 0.5 1.2 0.5 H4.5 L5.5 1.8 H10.8 Q11.5 1.8 11.5 2.5 V9.5 H0.5Z" fill="#dce8f2"/>
 <rect x="0.5" y="3" width="11" height="6.5" fill="#a6c6e2"/>
 <circle cx="6" cy="6.2" r="1.7" fill="#5f8fc4"/>
</svg>
<svg style="position:absolute;left:826px;top:3px;overflow:visible" width="50" height="12" viewBox="0 0 50 12">
 <path d="M0 5 H5" stroke="#f0f0f0" stroke-width="1.3"/>
 <path d="M5 2 Q9 1 10.5 2.5 V8.5 Q9 10 5 9 Z" fill="#f0f0f0"/>
 <path d="M10.5 3.5 H14 M10.5 7.5 H14" stroke="#f0f0f0" stroke-width="1.4"/>
 <path d="M23.5 0.5 L26.5 3.8 H24.5 V8.5 H22.5 V3.8 H20.5Z" fill="#f0f0f0"/>
 <path d="M28.5 11 L31.5 7.7 H29.5 V3 H27.5 V7.7 H25.5Z" fill="#f0f0f0"/>
 <path d="M36 4 H38 L41 1.5 V10 L38 7.5 H36Z" fill="#e8e8e8"/>
 <path d="M42.8 3.5 Q44 5.7 42.8 8" fill="none" stroke="#e0e0e0" stroke-width="1"/>
 <path d="M44.8 2 Q46.8 5.7 44.8 9.5" fill="none" stroke="#aaa" stroke-width="0.9"/>
 <path d="M46.8 0.8 Q49.5 5.7 46.8 10.6" fill="none" stroke="#777" stroke-width="0.9"/>
</svg>
<div style="position:absolute;top:3.36px;line-height:9.5px;font-size:9.5px;color:#dcdcdc;white-space:nowrap;will-change:transform;-webkit-text-stroke:0.25px #dcdcdc;left:885px;">20 feb, 09:41</div>
<div style="position:absolute;left:61px;top:16px;width:205px;height:182px;background:#2b2b2b;box-sizing:border-box;border:1px solid #1e1e1e;border-top:none;box-shadow:0 1px 1px rgba(0,10,40,0.5);"></div>
<div style="position:absolute;left:62px;top:50px;width:203px;height:16px;background:#cf2dc6;"></div>
<div style="position:absolute;top:19.80px;line-height:9.8px;font-size:9.8px;color:#e4e4e4;white-space:nowrap;will-change:transform;-webkit-text-stroke:0.35px #e4e4e4;transform:scaleX(0.9464);transform-origin:0 0;left:80.2px;">Nuova <u>s</u>cheda</div>
<div style="position:absolute;top:19.80px;line-height:9.8px;font-size:9.8px;color:#b4b4b4;white-space:nowrap;will-change:transform;-webkit-text-stroke:0.3px #b4b4b4;transform:scaleX(0.9350);transform-origin:100% 0;right:660.80px;">Ctrl+T</div>
<div style="position:absolute;top:36.33px;line-height:9.8px;font-size:9.8px;color:#e4e4e4;white-space:nowrap;will-change:transform;-webkit-text-stroke:0.35px #e4e4e4;transform:scaleX(0.9749);transform-origin:0 0;left:80.2px;">Nuova <u>f</u>inestra</div>
<div style="position:absolute;top:36.33px;line-height:9.8px;font-size:9.8px;color:#b4b4b4;white-space:nowrap;will-change:transform;-webkit-text-stroke:0.3px #b4b4b4;transform:scaleX(0.9591);transform-origin:100% 0;right:660.80px;">Ctrl+N</div>
<div style="position:absolute;top:52.86px;line-height:9.8px;font-size:9.8px;color:#e4e4e4;white-space:nowrap;will-change:transform;-webkit-text-stroke:0.35px #e4e4e4;transform:scaleX(0.9304);transform-origin:0 0;left:80.2px;">Crea carte<u>l</u>la...</div>
<div style="position:absolute;top:52.86px;line-height:9.8px;font-size:9.8px;color:#f3d4f0;white-space:nowrap;will-change:transform;-webkit-text-stroke:0.3px #f3d4f0;transform:scaleX(0.9537);transform-origin:100% 0;right:660.80px;">Maiusc+Ctrl+N</div>
<div style="position:absolute;top:69.39px;line-height:9.8px;font-size:9.8px;color:#e4e4e4;white-space:nowrap;will-change:transform;-webkit-text-stroke:0.35px #e4e4e4;transform:scaleX(0.9675);transform-origin:0 0;left:80.2px;">Crea doc<u>u</u>mento</div>
<div style="position:absolute;top:85.92px;line-height:9.8px;font-size:9.8px;color:#6a6a6a;white-space:nowrap;will-change:transform;-webkit-text-stroke:0.35px #6a6a6a;transform:scaleX(0.9806);transform-origin:0 0;left:80.2px;"><u>A</u>pri</div>
<div style="position:absolute;top:85.92px;line-height:9.8px;font-size:9.8px;color:#666666;white-space:nowrap;will-change:transform;-webkit-text-stroke:0.3px #666666;transform:scaleX(0.9623);transform-origin:100% 0;right:660.80px;">Ctrl+O</div>
<div style="position:absolute;top:102.45px;line-height:9.8px;font-size:9.8px;color:#e4e4e4;white-space:nowrap;will-change:transform;-webkit-text-stroke:0.35px #e4e4e4;transform:scaleX(0.9882);transform-origin:0 0;left:80.2px;">Apri un terminale qui</div>
<div style="position:absolute;top:118.98px;line-height:9.8px;font-size:9.8px;color:#e4e4e4;white-space:nowrap;will-change:transform;-webkit-text-stroke:0.35px #e4e4e4;transform:scaleX(0.9481);transform-origin:0 0;left:80.2px;">Trova in questa cartella</div>
<div style="position:absolute;top:135.51px;line-height:9.8px;font-size:9.8px;color:#e4e4e4;white-space:nowrap;will-change:transform;-webkit-text-stroke:0.35px #e4e4e4;transform:scaleX(1.0013);transform-origin:0 0;left:80.2px;"><u>P</u>roprietà...</div>
<div style="position:absolute;top:135.51px;line-height:9.8px;font-size:9.8px;color:#b4b4b4;white-space:nowrap;will-change:transform;-webkit-text-stroke:0.3px #b4b4b4;transform:scaleX(0.9931);transform-origin:100% 0;right:660.80px;">Alt+Invio</div>
<div style="position:absolute;top:152.04px;line-height:9.8px;font-size:9.8px;color:#e4e4e4;white-space:nowrap;will-change:transform;-webkit-text-stroke:0.35px #e4e4e4;transform:scaleX(0.9875);transform-origin:0 0;left:80.2px;">Chiudi <u>t</u>utte le finestre</div>
<div style="position:absolute;top:152.04px;line-height:9.8px;font-size:9.8px;color:#b4b4b4;white-space:nowrap;will-change:transform;-webkit-text-stroke:0.3px #b4b4b4;transform:scaleX(0.9363);transform-origin:100% 0;right:660.80px;">Maiusc+Ctrl+W</div>
<div style="position:absolute;top:168.57px;line-height:9.8px;font-size:9.8px;color:#e4e4e4;white-space:nowrap;will-change:transform;-webkit-text-stroke:0.35px #e4e4e4;transform:scaleX(0.9453);transform-origin:0 0;left:80.2px;"><u>C</u>hiudi scheda</div>
<div style="position:absolute;top:168.57px;line-height:9.8px;font-size:9.8px;color:#b4b4b4;white-space:nowrap;will-change:transform;-webkit-text-stroke:0.3px #b4b4b4;transform:scaleX(0.9431);transform-origin:100% 0;right:660.80px;">Ctrl+W</div>
<div style="position:absolute;top:185.10px;line-height:9.8px;font-size:9.8px;color:#e4e4e4;white-space:nowrap;will-change:transform;-webkit-text-stroke:0.35px #e4e4e4;transform:scaleX(0.9738);transform-origin:0 0;left:80.2px;">Chiudi <u>f</u>inestra</div>
<div style="position:absolute;top:185.10px;line-height:9.8px;font-size:9.8px;color:#b4b4b4;white-space:nowrap;will-change:transform;-webkit-text-stroke:0.3px #b4b4b4;transform:scaleX(0.9623);transform-origin:100% 0;right:660.80px;">Ctrl+Q</div>
<svg style="position:absolute;left:257px;top:71px;overflow:visible" width="6" height="7" viewBox="0 0 6 7"><path d="M1 1 L5 3.5 L1 6 Z" fill="#bbb"/></svg>
<svg style="position:absolute;left:65px;top:20px;overflow:visible" width="13" height="13" viewBox="0 0 13 13"><path d="M0.5 1.5 H4.5 L5.3 0.5 H10.5 V7.8 H0.5Z" fill="#e6e6e6"/><rect x="2" y="3.2" width="7" height="3.2" fill="#cfcfcf" stroke="#9a9a9a" stroke-width="0.7"/><circle cx="9.2" cy="8.8" r="2.3" fill="#6f9a2e"/><path d="M9.2 7.4 V10.200000000000001 M7.799999999999999 8.8 H10.6" stroke="#dff0c0" stroke-width="0.9"/></svg>
<svg style="position:absolute;left:65px;top:35px;overflow:visible" width="13" height="13" viewBox="0 0 13 13"><rect x="0.5" y="0.5" width="10.2" height="9.2" fill="#f2f2f2"/><rect x="0.5" y="0.5" width="10.2" height="2" fill="#c4c4c4"/><rect x="2.5" y="3" width="1.2" height="6.5" fill="#a8a8a8"/><circle cx="9.2" cy="8.8" r="2.3" fill="#6f9a2e"/><path d="M9.2 7.4 V10.200000000000001 M7.799999999999999 8.8 H10.6" stroke="#dff0c0" stroke-width="0.9"/></svg>
<svg style="position:absolute;left:65px;top:51px;overflow:visible" width="13" height="13" viewBox="0 0 13 13"><path d="M0.8 1.8 Q0.8 0.8 1.8 0.8 H4 L5 1.8 H10.5 V8.8 H0.8Z" fill="#e4ecf4"/><rect x="0.8" y="3" width="9.7" height="5.8" fill="#86b0d8"/><rect x="0.8" y="3" width="9.7" height="1" fill="#b8d4ec"/><circle cx="9" cy="8.6" r="2.3" fill="#6f9a2e"/><path d="M9 7.199999999999999 V10.0 M7.6 8.6 H10.4" stroke="#dff0c0" stroke-width="0.9"/></svg>
<svg style="position:absolute;left:66px;top:68px;overflow:visible" width="13" height="13" viewBox="0 0 13 13"><rect x="0.5" y="0.5" width="8.5" height="10.5" fill="#f2f2f2"/><circle cx="8.5" cy="9.5" r="2.3" fill="#6f9a2e"/><path d="M8.5 8.1 V10.9 M7.1 9.5 H9.9" stroke="#dff0c0" stroke-width="0.9"/></svg>
<svg style="position:absolute;left:65px;top:86px;overflow:visible" width="12" height="10" viewBox="0 0 12 10"><path d="M0.5 1.5 Q0.5 0.5 1.5 0.5 H4 L5 1.5 H10.5 V9 H0.5Z" fill="#555"/><rect x="0.5" y="3" width="10" height="6" fill="#4a4a4a"/></svg>
<svg style="position:absolute;left:65px;top:100px;overflow:visible" width="12" height="10" viewBox="0 0 12 10"><rect x="0.5" y="0.5" width="10.5" height="9" fill="#111" stroke="#ccc" stroke-width="0.9"/><path d="M2.5 2.5 L4.5 4.5 L2.5 6.5 M5 7.2 H8.5" stroke="#eee" stroke-width="1" fill="none"/></svg>
<svg style="position:absolute;left:65px;top:120px;overflow:visible" width="12" height="11" viewBox="0 0 12 11"><circle cx="4.6" cy="4.3" r="3.3" fill="none" stroke="#6a6a6a" stroke-width="1.3"/><path d="M7 6.8 L10.5 10.2" stroke="#6a6a6a" stroke-width="1.7"/></svg>
<svg style="position:absolute;left:65px;top:135px;overflow:visible" width="11" height="11" viewBox="0 0 11 11"><g transform="translate(5.5 5.5)" fill="#eeeeee"><rect x="-1.2" y="-5.6" width="2.4" height="3" transform="rotate(0)"/><rect x="-1.2" y="-5.6" width="2.4" height="3" transform="rotate(45)"/><rect x="-1.2" y="-5.6" width="2.4" height="3" transform="rotate(90)"/><rect x="-1.2" y="-5.6" width="2.4" height="3" transform="rotate(135)"/><rect x="-1.2" y="-5.6" width="2.4" height="3" transform="rotate(180)"/><rect x="-1.2" y="-5.6" width="2.4" height="3" transform="rotate(225)"/><rect x="-1.2" y="-5.6" width="2.4" height="3" transform="rotate(270)"/><rect x="-1.2" y="-5.6" width="2.4" height="3" transform="rotate(315)"/><circle r="3.7"/></g><circle cx="5.5" cy="5.5" r="1.5" fill="#2b2b2b"/></svg>
<svg style="position:absolute;left:67.5px;top:172px;overflow:visible" width="8" height="7" viewBox="0 0 8 7"><path d="M0.8 0.8 L6.5 6.2 M6.5 0.8 L0.8 6.2" stroke="#5e5e5e" stroke-width="1.5"/></svg>
<svg style="position:absolute;left:65px;top:181px;overflow:visible" width="12" height="12" viewBox="0 0 12 12"><circle cx="5.6" cy="5.8" r="5.4" fill="#d84a5c"/><path d="M3.5 3.8 A3 3 0 1 0 7.7 3.8" fill="none" stroke="#fff" stroke-width="1.2"/><path d="M5.6 2 V5.6" stroke="#fff" stroke-width="1.2"/></svg>
<svg style="position:absolute;left:448px;top:474px;overflow:visible" width="44" height="17" viewBox="0 0 44 17">
 <circle cx="17" cy="6.5" r="3.6" fill="#f2f6ff"/>
 <circle cx="7" cy="12.4" r="3.5" fill="#9db8f0"/>
 <circle cx="26.6" cy="12.4" r="3.5" fill="#94b2ee"/>
 <circle cx="36.4" cy="14" r="3.5" fill="#6f92e0"/>
</svg>
</body></html>
